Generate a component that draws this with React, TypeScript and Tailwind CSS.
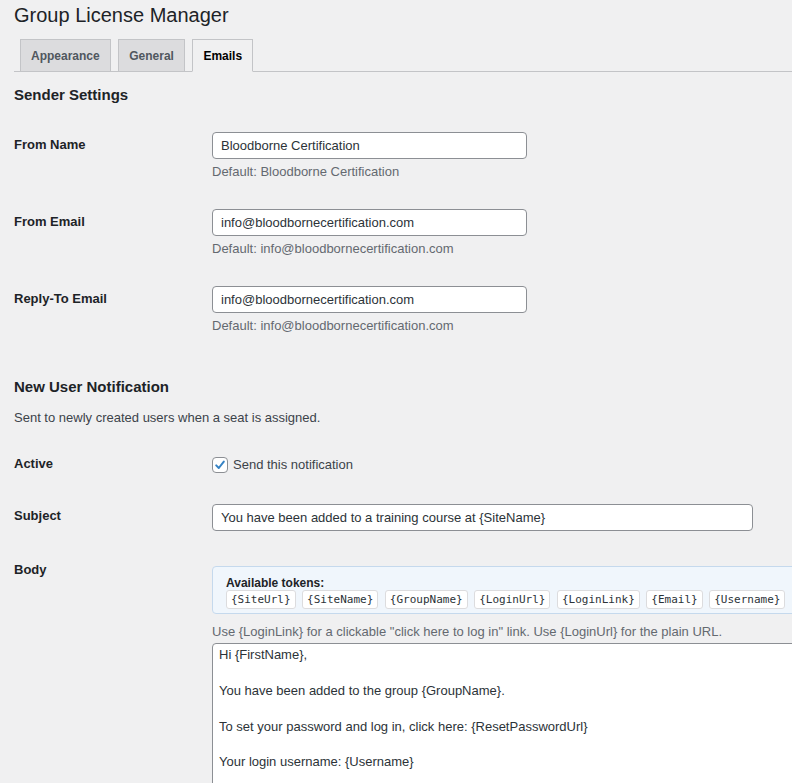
import React from "react";

const tokens = [
  "{SiteUrl}",
  "{SiteName}",
  "{GroupName}",
  "{LoginUrl}",
  "{LoginLink}",
  "{Email}",
  "{Username}",
  "{FirstName}",
];

const bodyText = `Hi {FirstName},

You have been added to the group {GroupName}.

To set your password and log in, click here: {ResetPasswordUrl}

Your login username: {Username}

Thanks,
{SiteName}`;

function Tab({ label, active }: { label: string; active?: boolean }) {
  return (
    <a
      href="#"
      className={
        active
          ? "-mb-px border border-[#c3c4c7] border-b-[#f0f0f1] bg-[#f0f0f1] px-[10px] pt-[6px] pb-[5px] text-[12px] font-bold leading-[20px] text-black"
          : "-mb-px border border-[#c3c4c7] bg-[#dcdcde] px-[10px] pt-[6px] pb-[5px] text-[12px] font-bold leading-[20px] text-[#50575e]"
      }
    >
      {label}
    </a>
  );
}

// one settings row: bold label on the left, field + default hint on the right
function TextRow({ label, value, hint }: { label: string; value: string; hint: string }) {
  return (
    <div className="flex pt-[15px] pb-[14px]">
      <div className="w-[198px] shrink-0 pt-[4px] text-[13px] font-bold leading-[18px] text-[#1d2327]">{label}</div>
      <div>
        <input
          type="text"
          defaultValue={value}
          className="block h-[27px] w-[315px] rounded-[4px] border border-[#8c8f94] bg-white px-[8px] text-[13px] text-[#2c3338] outline-none"
        />
        <p className="mt-[4px] text-[13px] leading-[17px] text-[#646970]">{hint}</p>
      </div>
    </div>
  );
}

export default function App() {
  return (
    <div className="min-h-screen w-full overflow-hidden bg-[#f0f0f1] pl-[14px] font-['Liberation_Sans',Arial,sans-serif] text-[13px] text-[#3c434a]">
      <h1 className="m-0 text-[20px] font-normal leading-[30px] text-[#1d2327]">Group License Manager</h1>

      {/* tabs */}
      <nav className="mt-[9px] flex gap-[7.5px] border-b border-[#c3c4c7] pl-[6px]">
        <Tab label="Appearance" />
        <Tab label="General" />
        <Tab label="Emails" active />
      </nav>

      <h2 className="mt-[12px] text-[15px] font-bold leading-[22px] text-[#1d2327]">Sender Settings</h2>

      <div className="mt-[11px]">
        <TextRow label="From Name" value="Bloodborne Certification" hint="Default: Bloodborne Certification" />
        <TextRow
          label="From Email"
          value="info@bloodbornecertification.com"
          hint="Default: info@bloodbornecertification.com"
        />
        <TextRow
          label="Reply-To Email"
          value="info@bloodbornecertification.com"
          hint="Default: info@bloodbornecertification.com"
        />
      </div>

      <h2 className="mt-[28px] text-[15px] font-bold leading-[22px] text-[#1d2327]">New User Notification</h2>
      <p className="mt-[11px] leading-[18px]">Sent to newly created users when a seat is assigned.</p>

      {/* Active */}
      <div className="flex pt-[25px]">
        <div className="w-[198px] shrink-0 pt-[3px] text-[13px] font-bold leading-[18px] text-[#1d2327]">Active</div>
        <label className="flex h-[24px] items-center gap-[5px] pt-[1px] text-[#3c434a]">
          <span className="flex h-[16px] w-[16px] items-center justify-center rounded-[4px] border border-[#8c8f94] bg-white">
            <svg width="14" height="14" viewBox="0 0 14 14" fill="none" stroke="#3582c4" strokeWidth="2" strokeLinecap="round" strokeLinejoin="round">
              <path d="M3.2 7.4L5.8 10L10.8 3.6" />
            </svg>
          </span>
          Send this notification
        </label>
      </div>

      {/* Subject */}
      <div className="flex pt-[28px]">
        <div className="w-[198px] shrink-0 pt-[3px] text-[13px] font-bold leading-[18px] text-[#1d2327]">Subject</div>
        <input
          type="text"
          defaultValue="You have been added to a training course at {SiteName}"
          className="block h-[27px] w-[541px] shrink-0 rounded-[4px] border border-[#8c8f94] bg-white px-[8px] text-[13px] text-[#2c3338] outline-none"
        />
      </div>

      {/* Body */}
      <div className="flex pt-[30px]">
        <div className="w-[198px] shrink-0 text-[13px] font-bold leading-[18px] text-[#1d2327]">Body</div>
        <div className="shrink-0 pt-[5px]">
          <div className="w-[720px] overflow-hidden rounded-[4px] border border-[#c5d9ed] bg-[#f0f6fc] pt-[9px] pb-[4px] pl-[13px]">
            <div className="text-[12px] font-bold leading-[14px] text-[#1d2327]">Available tokens:</div>
            <div className="flex gap-[6.5px] whitespace-nowrap">
              {tokens.map((t) => (
                <code
                  key={t}
                  className="rounded-[3px] border border-[#dcdcde] bg-white px-[4px] font-['DejaVu_Sans_Mono',monospace] text-[11px] leading-[17px] text-[#2c3338]"
                >
                  {t}
                </code>
              ))}
            </div>
          </div>
          <p className="mt-[9px] leading-[18px] text-[#646970]">
            Use {"{LoginLink}"} for a clickable "click here to log in" link. Use {"{LoginUrl}"} for the plain URL.
          </p>
          <textarea
            defaultValue={bodyText}
            className="mt-[2px] block h-[220px] w-[720px] resize-none rounded-[4px] border border-[#8c8f94] bg-white px-[6px] py-[2px] text-[13px] leading-[17.9px] text-[#2c3338] outline-none"
          />
        </div>
      </div>
    </div>
  );
}
